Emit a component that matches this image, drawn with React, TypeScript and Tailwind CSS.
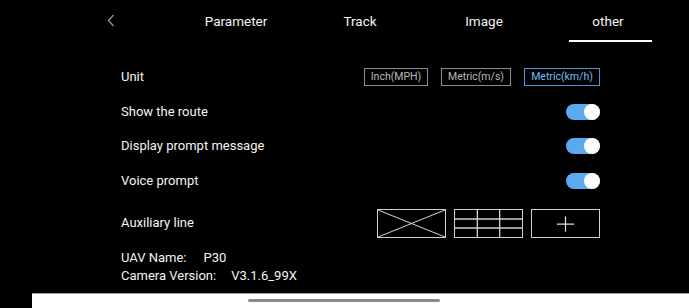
import React from "react";

const TABS = ["Parameter", "Track", "Image", "other"];
const ACTIVE = "other";

function Toggle() {
  return (
    <div className="flex h-[16px] w-[34px] items-center justify-end rounded-full bg-[#5ca9f0]">
      <div className="h-[16px] w-[16px] rounded-full bg-white" />
    </div>
  );
}

function UnitButton({ label, active, width }: { label: string; active?: boolean; width: string }) {
  return (
    <div
      className={`flex h-[18px] items-center justify-center border text-[10.5px] leading-none ${width} ${
        active ? "border-[#4f93dc] text-[#7cb9f4]" : "border-[#8c8c8c] text-[#b8b8b8]"
      }`}
    >
      {label}
    </div>
  );
}

function LineBox({ children }: { children: React.ReactNode }) {
  return (
    <div className="h-[29px] w-[69px] border-[1.5px] border-[#cfcfcf]">
      <svg viewBox="0 0 66 26" preserveAspectRatio="none" className="h-full w-full">
        {children}
      </svg>
    </div>
  );
}

export default function App() {
  return (
    <div className="flex h-[308px] w-[689px] flex-col overflow-hidden bg-black font-['Roboto',sans-serif] text-[#f4f4f4]">
      {/* tab bar */}
      <div className="flex h-[43px] shrink-0">
        <div className="flex w-[174px] items-start pl-[107px] pt-[14px]">
          <svg width="8" height="13" viewBox="0 0 8 13" fill="none">
            <path d="M6.5 1 1.5 6.5 6.5 12" stroke="#9a9a9a" strokeWidth="1.2" />
          </svg>
        </div>
        {TABS.map((t) => (
          <div key={t} className="flex w-[124px] flex-col items-center pt-[13px]">
            <span className="text-[13.5px] leading-[17px]">{t}</span>
            {t === ACTIVE && <div className="mt-[10px] ml-[4px] h-[2px] w-[83px] bg-white" />}
          </div>
        ))}
      </div>

      {/* settings */}
      <div className="flex flex-col pl-[121px] pr-[89px] pt-[17px] text-[13px]">
        <div className="flex h-[34px] items-center justify-between">
          <span>Unit</span>
          <div className="flex gap-[13px]">
            <UnitButton label="Inch(MPH)" width="w-[64px]" />
            <UnitButton label="Metric(m/s)" width="w-[70px]" />
            <UnitButton label="Metric(km/h)" width="w-[76px]" active />
          </div>
        </div>
        <div className="flex h-[35px] items-center justify-between">
          <span>Show the route</span>
          <Toggle />
        </div>
        <div className="flex h-[34px] items-center justify-between">
          <span>Display prompt message</span>
          <Toggle />
        </div>
        <div className="flex h-[35px] items-center justify-between">
          <span>Voice prompt</span>
          <Toggle />
        </div>
        <div className="flex h-[50px] items-center justify-between">
          <span>Auxiliary line</span>
          <div className="flex gap-[8px]">
            <LineBox>
              <path d="M0 0 66 26M66 0 0 26" stroke="#cfcfcf" strokeWidth="1" />
            </LineBox>
            <LineBox>
              <path d="M22 0V26M44 0V26M0 8.7H66M0 17.3H66" stroke="#cfcfcf" strokeWidth="1.3" />
            </LineBox>
            <LineBox>
              <path d="M24.5 13.5H41.5M33 6V21" stroke="#e0e0e0" strokeWidth="1.2" />
            </LineBox>
          </div>
        </div>
        <div className="mt-[1px] leading-[18px]">
          UAV Name:<span className="ml-[17px]">P30</span>
        </div>
        <div className="leading-[18px]">
          Camera Version:<span className="ml-[15px]">V3.1.6_99X</span>
        </div>
      </div>

      {/* bottom sheet edge */}
      <div className="mt-auto ml-[32px] flex h-[15px] justify-start border-t border-[#9a9a9a] bg-white pl-[216px] pt-[5px]">
        <div className="h-[3px] w-[192px] rounded-full bg-[#8a8a8a]" />
      </div>
    </div>
  );
}
